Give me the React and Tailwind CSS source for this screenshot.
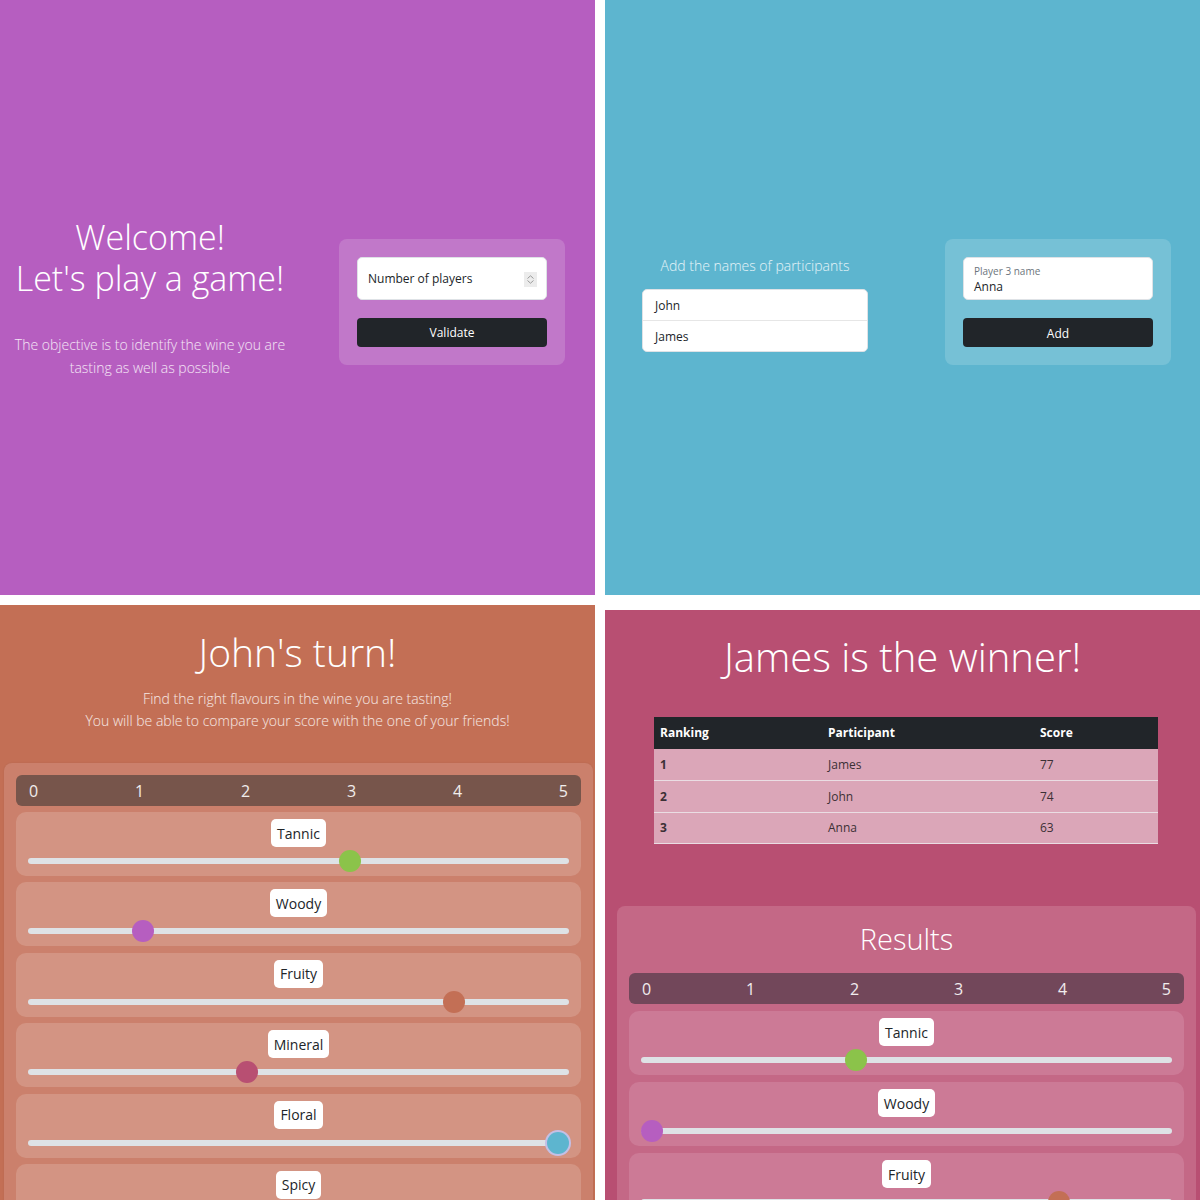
import React from 'react';

const font = { fontFamily: '"Open Sans", "Noto Sans", sans-serif' };

const tasting = [
  { name: 'Tannic', value: 3, color: 'bg-[#8bc34a]' },
  { name: 'Woody', value: 1, color: 'bg-[#b65ec0]' },
  { name: 'Fruity', value: 4, color: 'bg-[#c36f55]' },
  { name: 'Mineral', value: 2, color: 'bg-[#b84f72]' },
  { name: 'Floral', value: 5, color: 'bg-[#5db5cf] ring-2 ring-[#c4c0e6]' },
  { name: 'Spicy', value: 0, color: 'bg-[#77554b]' },
];

const results = [
  { name: 'Tannic', value: 2, color: 'bg-[#8bc34a]' },
  { name: 'Woody', value: 0, color: 'bg-[#b65ec0]' },
  { name: 'Fruity', value: 4, color: 'bg-[#c36f55]' },
];

const ranking = [
  { rank: 1, name: 'James', score: 77 },
  { rank: 2, name: 'John', score: 74 },
  { rank: 3, name: 'Anna', score: 63 },
];

const Scale = ({ bg }) => (
  <div className={`h-[31px] rounded-[6px] ${bg} flex items-center justify-between px-[13px] text-[16px] text-white/90`}>
    {[0, 1, 2, 3, 4, 5].map(n => <span key={n}>{n}</span>)}
  </div>
);

const FlavourRow = ({ item, bg }) => (
  <div className={`h-[64px] shrink-0 rounded-[10px] ${bg} px-[12px] pt-[7px]`}>
    <div className="mx-auto w-fit h-[28px] px-[6px] rounded-[5px] bg-white text-[14px] text-[#212529] flex items-center">{item.name}</div>
    <div className="relative mt-[11px] h-[6px] rounded-full bg-[#dee2e6]">
      <div
        className={`absolute top-1/2 -translate-y-1/2 w-[22px] h-[22px] rounded-full ${item.color}`}
        style={{ left: `calc(${item.value * 20}% - ${item.value * 4.4}px)` }}
      />
    </div>
  </div>
);

const Spinner = () => (
  <div className="w-[13px] h-[15px] bg-[#ececec] flex flex-col items-center justify-center gap-[1px]">
    <svg width="7" height="4" viewBox="0 0 7 4"><path d="M0.5 3.5 L3.5 0.8 L6.5 3.5" fill="none" stroke="#9a9a9a" strokeWidth="1" /></svg>
    <svg width="7" height="4" viewBox="0 0 7 4"><path d="M0.5 0.5 L3.5 3.2 L6.5 0.5" fill="none" stroke="#9a9a9a" strokeWidth="1" /></svg>
  </div>
);

export default function App() {
  return (
    <div className="w-[1200px] h-[1200px] bg-white overflow-hidden flex flex-col" style={font}>
      <div className="flex gap-[10px] h-[595px] shrink-0">
        {/* welcome */}
        <section className="w-[595px] h-full bg-[#b65ec0] flex items-center">
          <div className="w-[300px] text-center text-white">
            <h1 className="text-[34px] font-light">
              <span className="block h-[41px] leading-[41px]">Welcome!</span>
              <span className="block h-[41px] leading-[41px]">Let's play a game!</span>
            </h1>
            <p className="mt-[34px] text-[14px] leading-[23px] font-light text-white/85">The objective is to identify the wine you are<br />tasting as well as possible</p>
          </div>
          <div className="ml-[39px] mt-[8px] w-[226px] rounded-[8px] bg-[#c178c9] p-[18px]">
            <div className="h-[43px] bg-white rounded-[5px] border border-[#dee2e6] flex items-center justify-between pl-[10px] pr-[9px] pt-[2px] text-[12px] text-[#212529]">
              <span>Number of players</span>
              <Spinner />
            </div>
            <button className="mt-[18px] w-full h-[29px] bg-[#212529] rounded-[4px] text-white text-[12px] pt-[2px] flex items-center justify-center">Validate</button>
          </div>
        </section>

        {/* participants */}
        <section className="w-[595px] h-full bg-[#5db5cf] flex items-center">
          <div className="w-[300px] mt-[10px] flex flex-col items-center">
            <p className="text-[14px] leading-[23px] font-light text-white/85">Add the names of participants</p>
            <div className="mt-[12px] w-[226px] bg-white rounded-[5px] border border-[#dee2e6] text-[12px] text-[#212529]">
              <div className="h-[31px] px-[12px] pt-[2px] flex items-center border-b border-[#e6e6e6]">John</div>
              <div className="h-[30px] px-[12px] pt-[2px] flex items-center">James</div>
            </div>
          </div>
          <div className="ml-[40px] mt-[9px] w-[226px] rounded-[8px] bg-[#76c1d6] p-[18px]">
            <div className="h-[43px] bg-white rounded-[5px] border border-[#dee2e6] flex flex-col justify-center px-[10px] pt-[2px]">
              <span className="text-[10px] leading-[13px] text-[#6c757d]">Player 3 name</span>
              <span className="text-[12px] leading-[17px] text-[#212529]">Anna</span>
            </div>
            <button className="mt-[18px] w-full h-[29px] bg-[#212529] rounded-[4px] text-white text-[12px] pt-[2px] flex items-center justify-center">Add</button>
          </div>
        </section>
      </div>

      <div className="flex gap-[10px] mt-[10px] h-[595px] shrink-0">
        {/* turn */}
        <section className="w-[595px] h-full bg-[#c36f55] overflow-hidden pt-[19px]">
          <h2 className="text-center text-[39px] leading-[56px] font-light text-white">John's turn!</h2>
          <p className="mt-[8px] text-center text-[14px] leading-[22px] font-light text-white/85">Find the right flavours in the wine you are tasting!<br />You will be able to compare your score with the one of your friends!</p>
          <div className="mt-[31px] ml-[4px] w-[589px] rounded-[8px] bg-[#cb806c] p-[12px] shadow-[0_0_2px_rgba(0,0,0,0.08)]">
            <Scale bg="bg-[#77554b]" />
            <div className="mt-[6px] flex flex-col gap-[6.4px]">
              {tasting.map(t => <FlavourRow key={t.name} item={t} bg="bg-[#d39483]" />)}
            </div>
          </div>
        </section>

        {/* winner */}
        <section className="w-[595px] mt-[5px] h-full bg-[#b84f72] overflow-hidden pt-[19px]">
          <h2 className="text-center text-[40px] leading-[56px] font-light text-white">James is the winner!</h2>
          <table className="mt-[32px] ml-[49px] w-[504px] border-collapse text-[12px]">
            <thead>
              <tr className="h-[32px] bg-[#212529] text-white font-bold text-left">
                <th className="w-[168px] px-[6px]">Ranking</th>
                <th className="w-[212px] px-[6px]">Participant</th>
                <th className="px-[6px]">Score</th>
              </tr>
            </thead>
            <tbody className="text-[#3b3035]">
              {ranking.map(r => (
                <tr key={r.rank} className="h-[31.5px] bg-[#dba6b8] border-b border-[#eadde3]">
                  <td className="px-[6px] pt-[1px] font-bold">{r.rank}</td>
                  <td className="px-[6px] pt-[1px]">{r.name}</td>
                  <td className="px-[6px] pt-[1px]">{r.score}</td>
                </tr>
              ))}
            </tbody>
          </table>
          <div className="mt-[62px] ml-[12px] w-[579px] rounded-[8px] bg-[#c46886] px-[12px] pt-[11px] pb-[12px]">
            <h3 className="text-center text-[29px] leading-[44px] font-light text-white">Results</h3>
            <div className="mt-[12px]">
              <Scale bg="bg-[#72475a]" />
            </div>
            <div className="mt-[7px] flex flex-col gap-[7px]">
              {results.map(t => <FlavourRow key={t.name} item={t} bg="bg-[#cc7a96]" />)}
            </div>
          </div>
        </section>
      </div>
    </div>
  );
}
